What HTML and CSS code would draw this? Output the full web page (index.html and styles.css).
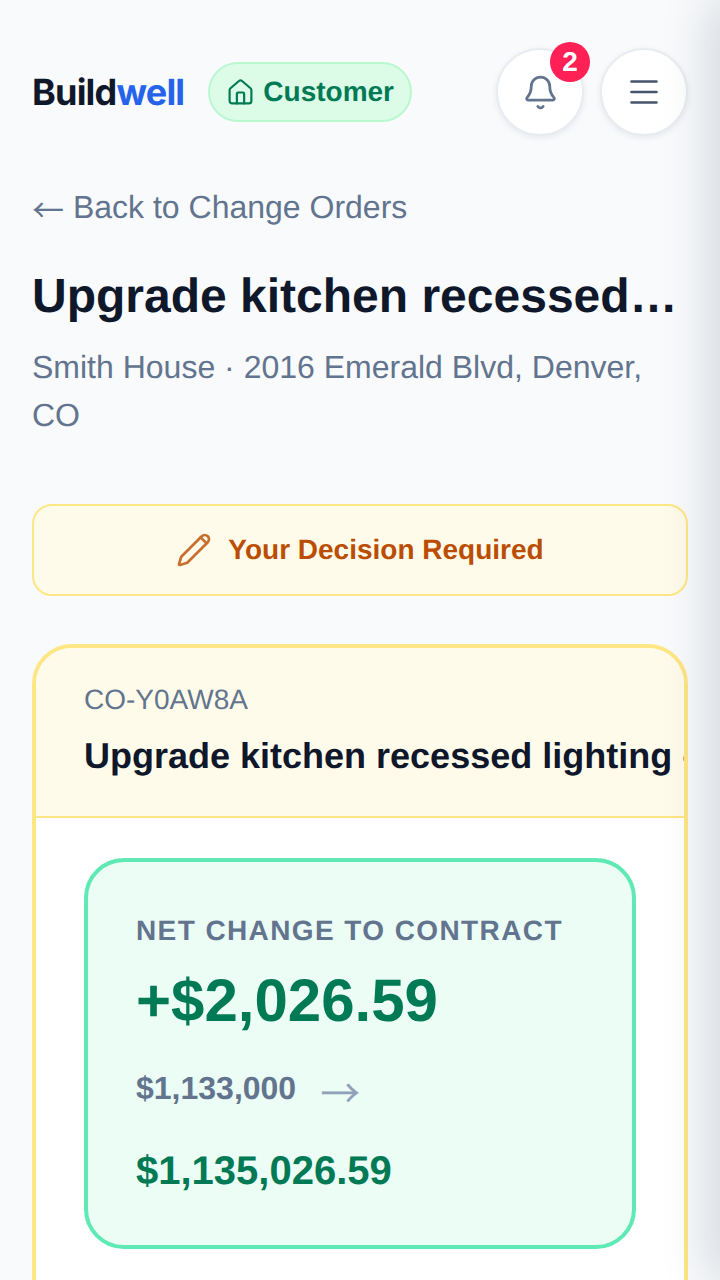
FILE: index.html
```html
<!DOCTYPE html>
<html lang="en">
<head>
<meta charset="utf-8">
<title>Change Order</title>
<link rel="stylesheet" href="styles.css">
</head>
<body>
<div class="page">
  <header class="topbar">
    <div class="brand">
      <span class="logo">Build<span class="logo-accent">well</span></span>
      <span class="role">
        <svg class="role-icon" viewBox="0 0 24 24" fill="none" stroke="currentColor" stroke-width="1.8" stroke-linecap="round" stroke-linejoin="round"><path d="M15 21v-8a1 1 0 0 0-1-1h-4a1 1 0 0 0-1 1v8"/><path d="M3 10a2 2 0 0 1 .709-1.528l7-5.999a2 2 0 0 1 2.582 0l7 5.999A2 2 0 0 1 21 10v9a2 2 0 0 1-2 2H5a2 2 0 0 1-2-2z"/></svg>
        Customer
      </span>
    </div>
    <div class="actions">
      <button class="circle">
        <svg class="bell" viewBox="0 0 24 24" fill="none" stroke="currentColor" stroke-width="1.8" stroke-linecap="round" stroke-linejoin="round"><path d="M10.268 21a2 2 0 0 0 3.464 0"/><path d="M3.262 15.326A1 1 0 0 0 4 17h16a1 1 0 0 0 .74-1.673C19.41 13.956 18 12.499 18 8A6 6 0 0 0 6 8c0 4.499-1.411 5.956-2.738 7.326"/></svg>
        <span class="badge">2</span>
      </button>
      <button class="circle">
        <svg class="menu" viewBox="0 0 28 24" fill="none" stroke="currentColor" stroke-width="2.6" stroke-linecap="round"><path d="M1.5 1.5h25M1.5 12h25M1.5 22.5h25"/></svg>
      </button>
    </div>
  </header>

  <a class="back"><span class="arrow-glyph">←</span> Back to Change Orders</a>
  <h1 class="title">Upgrade kitchen recessed lighting - main floor</h1>
  <p class="sub">Smith House · 2016 Emerald Blvd, Denver, CO</p>

  <div class="notice">
    <svg class="pencil" viewBox="0 0 24 24" fill="none" stroke="currentColor" stroke-width="1.8" stroke-linecap="round" stroke-linejoin="round"><path d="M21.174 6.812a2 2 0 0 0-3.986-3.987L3.842 16.174a2 2 0 0 0-.5.83l-1.321 4.352a.5.5 0 0 0 .623.622l4.353-1.32a2 2 0 0 0 .83-.497z"/><path d="m16.4 3.6 4 4"/></svg>
    <span>Your Decision Required</span>
  </div>

  <section class="card">
    <div class="card-head">
      <div class="co-id">CO-Y0AW8A</div>
      <div class="co-title">Upgrade kitchen recessed lighting - main floor</div>
    </div>
    <div class="card-body">
      <div class="net">
        <div class="net-label">NET CHANGE TO CONTRACT</div>
        <div class="net-amount">+$2,026.59</div>
        <div class="net-flow">
          <span class="net-old">$1,133,000</span>
          <span class="net-arrow">→</span>
          <span class="net-new">$1,135,026.59</span>
        </div>
      </div>
    </div>
  </section>
</div>
<div class="drawer"></div>
</body>
</html>
```
FILE: styles.css
```css
* { box-sizing: border-box; }
html, body { margin: 0; height: 1280px; overflow: hidden; }
body { background: #f8fafc; font-family: "Liberation Sans", Arial, sans-serif; color: #0f172b; text-rendering: geometricPrecision; }
.page { padding: 48px 32px 0; }
.topbar { display: flex; justify-content: space-between; align-items: center; height: 88px; }
.brand { display: flex; align-items: center; gap: 24px; }
.logo { font-family: Inter, sans-serif; font-weight: 700; font-size: 36px; letter-spacing: -0.8px; color: #0f172b; }
.logo-accent { color: #2563eb; }
.role { display: flex; align-items: center; gap: 8px; height: 60px; padding: 0 16px; border: 2px solid #b9f8cf; border-radius: 30px; background: #dcfce7; color: #007a55; font-weight: 700; font-size: 28px; }
.role-icon { width: 29px; height: 29px; }
.actions { display: flex; gap: 16px; }
.circle { position: relative; display: flex; align-items: center; justify-content: center; width: 88px; height: 88px; padding: 0; border: 2px solid #e8ecf1; border-radius: 50%; background: #fff; box-shadow: 0 2px 6px rgba(15,23,43,.08); }
.bell { width: 37px; height: 37px; color: #62748e; }
.menu { width: 28px; height: 24px; color: #45556c; }
.badge { position: absolute; top: -8px; right: -8px; width: 40px; height: 40px; border-radius: 50%; background: #ff2056; color: #fff; font-weight: 700; font-size: 28px; line-height: 40px; text-align: center; }
.back { display: block; margin-top: 49px; font-size: 32px; line-height: 44px; color: #62748e; }
.arrow-glyph { font-family: "Noto Sans CJK SC", sans-serif; line-height: 0; vertical-align: -4px; }
.title { margin: 38px 0 0; font-size: 48px; line-height: 60px; font-weight: 700; white-space: nowrap; overflow: hidden; text-overflow: ellipsis; }
.sub { margin: 16px 0 0; font-size: 32px; line-height: 48px; color: #62748e; }
.notice { display: flex; align-items: center; justify-content: center; gap: 16px; height: 92px; margin-top: 65px; border: 2px solid #fee685; border-radius: 20px; background: #fffbeb; color: #bb4d00; font-size: 28px; font-weight: 700; }
.pencil { width: 36px; height: 36px; opacity: .8; }
.card { margin-top: 48px; border: 4px solid #fee685; border-radius: 40px; background: #fff; overflow: hidden; height: 800px; }
.card-head { padding: 32px 12px 34px 48px; background: #fffbeb; border-bottom: 2px solid #fee685; }
.co-id { font-size: 28px; line-height: 40px; color: #62748e; }
.co-title { margin-top: 10px; font-size: 36px; line-height: 52px; font-weight: 700; white-space: nowrap; }
.card-body { padding: 40px 48px; }
.net { padding: 48px 48px 44px; border: 4px solid #5ee9b5; border-radius: 40px; background: #ecfdf5; }
.net-label { font-size: 28px; line-height: 42px; font-weight: 700; letter-spacing: 1.4px; color: #62748e; }
.net-amount { margin-top: 13px; font-size: 60px; line-height: 72px; font-weight: 700; color: #007a55; }
.net-flow { display: flex; flex-wrap: wrap; align-items: center; gap: 23px 24px; margin-top: 21px; }
.net-old { font-size: 32px; line-height: 60px; font-weight: 700; color: #62748e; }
.net-arrow { font-family: "Noto Sans CJK SC", sans-serif; font-size: 40px; line-height: 52px; margin-top: 6px; color: #90a1b9; }
.net-new { font-size: 40px; line-height: 60px; font-weight: 700; color: #007a55; width: 100%; }
.drawer { position: fixed; top: 0; left: 100%; width: 100%; height: 100%; box-shadow: -8px 0 48px rgba(15,23,43,.16); }
```
